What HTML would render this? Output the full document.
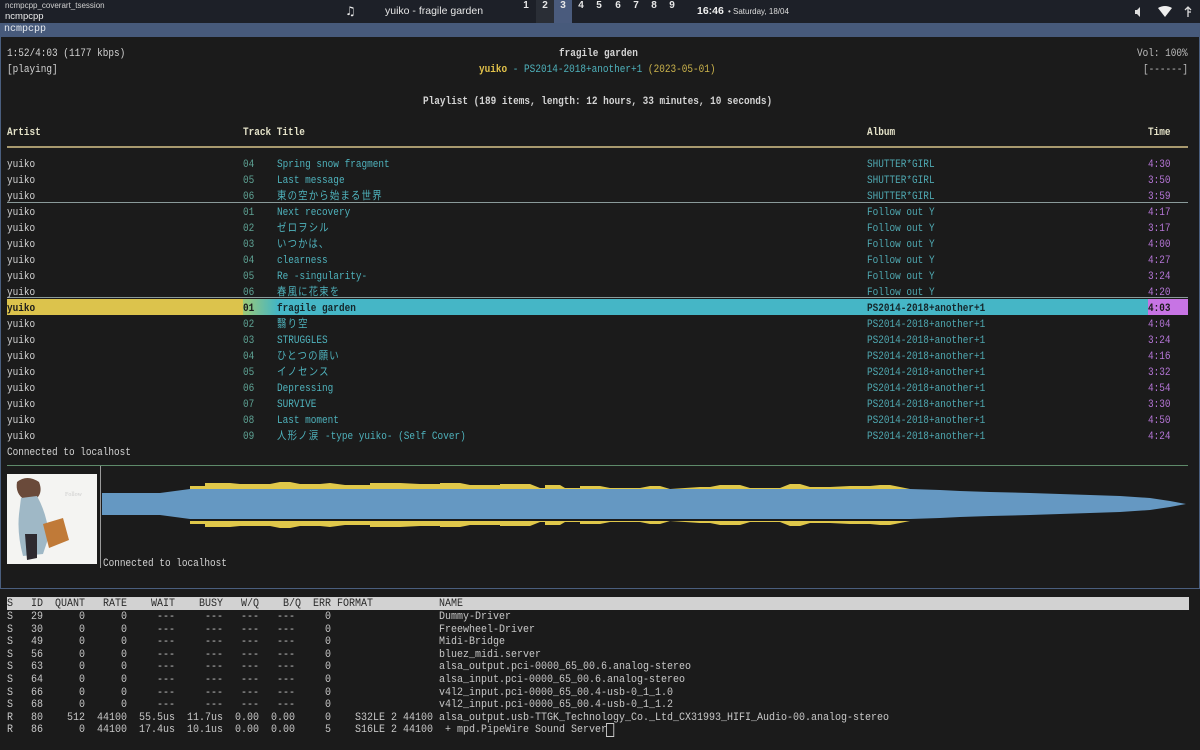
<!DOCTYPE html>
<html><head><meta charset="utf-8">
<style>
*{margin:0;padding:0;box-sizing:border-box}
body{width:1200px;height:750px;background:#1b1b1b;overflow:hidden;position:relative;font-family:"Liberation Mono","Noto Sans CJK JP",monospace;}
.t{position:absolute;margin-top:1.5px;font-size:11px;line-height:16px;height:16px;white-space:pre;color:#d4d4d4;transform:scaleX(0.853);transform-origin:0 0}
.b{font-weight:bold}
.cj{letter-spacing:1.4px;font-family:"Noto Sans CJK JP",sans-serif;font-size:11px;display:inline-block;line-height:16px;height:16px;vertical-align:top;margin-top:-2px}
.tr{color:#5fa496}.ti{color:#4fb3bd}.al{color:#4fa9b2}.tm{color:#b676d8}
.bar{position:absolute;left:0;top:0;width:1200px;height:23px;background:#1d2028}
.ws{position:absolute;top:0;height:23px;line-height:23px;font:bold 10px "Liberation Sans",sans-serif;color:#e8e8e8;width:18px;text-align:center}
pre{position:absolute;left:7px;font-family:"Liberation Mono",monospace;font-size:11px;line-height:12.6px;color:#c8c8c8;transform:scaleX(0.909);transform-origin:0 0}
</style></head><body>
<div class="bar"></div>
<div style="position:absolute;left:5px;top:1px;font:8px 'Liberation Sans',sans-serif;color:#d0d0d0">ncmpcpp_coverart_tsession</div>
<div style="position:absolute;left:5px;top:11px;font:9.5px 'Liberation Sans',sans-serif;color:#eee">ncmpcpp</div>
<div style="position:absolute;left:345px;top:4px;font:bold 12px 'DejaVu Sans',sans-serif;color:#eee">♫</div>
<div style="position:absolute;left:385px;top:5px;font:10.5px 'Liberation Sans',sans-serif;color:#e6e6e6">yuiko - fragile garden</div>
<div style="position:absolute;left:536px;top:0;width:18px;height:23px;background:#2a2e36"></div>
<div style="position:absolute;left:554px;top:0;width:18px;height:23px;background:#4a5b7d"></div>
<div class="ws" style="left:517px">1</div><div class="ws" style="left:536px">2</div><div class="ws" style="left:554px">3</div><div class="ws" style="left:572px">4</div><div class="ws" style="left:590px">5</div><div class="ws" style="left:609px">6</div><div class="ws" style="left:627px">7</div><div class="ws" style="left:645px">8</div><div class="ws" style="left:663px">9</div>
<div style="position:absolute;left:697px;top:5px;font:bold 10.5px 'Liberation Sans',sans-serif;color:#f0f0f0">16:46</div>
<div style="position:absolute;left:728px;top:7px;font:8px 'Liberation Sans',sans-serif;color:#ddd">• Saturday, 18/04</div>
<svg style="position:absolute;left:1130px;top:4px" width="65" height="16" viewBox="0 0 65 16">
<path d="M5 6h2l3-3v10l-3-3H5z" fill="#ddd"/>
<path d="M28 4 Q35 0 42 4 L35 13z" fill="#eee"/>
<path d="M58 3v10M58 8h3M55 6l3-3 3 3" stroke="#ddd" fill="none" stroke-width="1.3"/>
</svg>
<div style="position:absolute;left:0;top:23px;width:1200px;height:14px;background:#475a7b"></div>
<div style="position:absolute;left:4px;top:23px;font:10px 'Liberation Mono',monospace;line-height:14px;color:#e4e8ee">ncmpcpp</div>
<div style="position:absolute;left:0;top:37px;width:1200px;height:552px;border:1px solid #4a5e7e;border-top:none"></div>

<div class="t" style="left:7px;top:44px">1:52/4:03 (1177 kbps)</div>
<div class="t b" style="left:559px;top:44px">fragile garden</div>
<div class="t" style="left:1137px;top:44px;color:#bdbdbd">Vol: 100%</div>
<div class="t" style="left:7px;top:60px">[playing]</div>
<div class="t" style="left:479px;top:60px"><span class="b" style="color:#e2c24a">yuiko</span><span class="ti"> - PS2014-2018+another+1 </span><span style="color:#cdb54c">(2023-05-01)</span></div>
<div class="t" style="left:1143px;top:60px;color:#bdbdbd">[------]</div>
<div class="t b" style="left:423px;top:92px">Playlist (189 items, length: 12 hours, 33 minutes, 10 seconds)</div>
<div class="t b" style="left:7px;top:123px;color:#e4e2c8">Artist</div>
<div class="t b" style="left:243px;top:123px;color:#e4e2c8">Track Title</div>
<div class="t b" style="left:867px;top:123px;color:#e4e2c8">Album</div>
<div class="t b" style="left:1148px;top:123px;color:#e4e2c8">Time</div>
<div style="position:absolute;left:7px;top:146px;width:1181px;height:2px;background:#a8996e"></div>
<div style="position:absolute;left:7px;top:202px;width:1181px;height:1px;background:#8a9a9a"></div>
<div style="position:absolute;left:7px;top:297px;width:1181px;height:1px;background:#8a9a9a"></div>
<div style="position:absolute;left:7px;top:299px;width:236px;height:16px;background:#dcc34c"></div>
<div style="position:absolute;left:243px;top:299px;width:34px;height:16px;background:linear-gradient(90deg,#9cc878,#45b6c2)"></div>
<div style="position:absolute;left:277px;top:299px;width:871px;height:16px;background:#45b6c6"></div>
<div style="position:absolute;left:1148px;top:299px;width:40px;height:16px;background:#c774e4"></div>

<div class="t" style="left:7px;top:155px">yuiko</div><div class="t tr" style="left:243px;top:155px">04</div><div class="t ti" style="left:277px;top:155px">Spring snow fragment</div><div class="t al" style="left:867px;top:155px">SHUTTER*GIRL</div><div class="t tm" style="left:1148px;top:155px">4:30</div>
<div class="t" style="left:7px;top:171px">yuiko</div><div class="t tr" style="left:243px;top:171px">05</div><div class="t ti" style="left:277px;top:171px">Last message</div><div class="t al" style="left:867px;top:171px">SHUTTER*GIRL</div><div class="t tm" style="left:1148px;top:171px">3:50</div>
<div class="t" style="left:7px;top:187px">yuiko</div><div class="t tr" style="left:243px;top:187px">06</div><div class="t ti" style="left:277px;top:187px"><span class="cj">東の空から始まる世界</span></div><div class="t al" style="left:867px;top:187px">SHUTTER*GIRL</div><div class="t tm" style="left:1148px;top:187px">3:59</div>
<div class="t" style="left:7px;top:203px">yuiko</div><div class="t tr" style="left:243px;top:203px">01</div><div class="t ti" style="left:277px;top:203px">Next recovery</div><div class="t al" style="left:867px;top:203px">Follow out Y</div><div class="t tm" style="left:1148px;top:203px">4:17</div>
<div class="t" style="left:7px;top:219px">yuiko</div><div class="t tr" style="left:243px;top:219px">02</div><div class="t ti" style="left:277px;top:219px"><span class="cj">ゼロヲシル</span></div><div class="t al" style="left:867px;top:219px">Follow out Y</div><div class="t tm" style="left:1148px;top:219px">3:17</div>
<div class="t" style="left:7px;top:235px">yuiko</div><div class="t tr" style="left:243px;top:235px">03</div><div class="t ti" style="left:277px;top:235px"><span class="cj">いつかは、</span></div><div class="t al" style="left:867px;top:235px">Follow out Y</div><div class="t tm" style="left:1148px;top:235px">4:00</div>
<div class="t" style="left:7px;top:251px">yuiko</div><div class="t tr" style="left:243px;top:251px">04</div><div class="t ti" style="left:277px;top:251px">clearness</div><div class="t al" style="left:867px;top:251px">Follow out Y</div><div class="t tm" style="left:1148px;top:251px">4:27</div>
<div class="t" style="left:7px;top:267px">yuiko</div><div class="t tr" style="left:243px;top:267px">05</div><div class="t ti" style="left:277px;top:267px">Re -singularity-</div><div class="t al" style="left:867px;top:267px">Follow out Y</div><div class="t tm" style="left:1148px;top:267px">3:24</div>
<div class="t" style="left:7px;top:283px">yuiko</div><div class="t tr" style="left:243px;top:283px">06</div><div class="t ti" style="left:277px;top:283px"><span class="cj">春風に花束を</span></div><div class="t al" style="left:867px;top:283px">Follow out Y</div><div class="t tm" style="left:1148px;top:283px">4:20</div>
<div class="t b" style="left:7px;top:299px;color:#1b1b1b">yuiko</div><div class="t b" style="left:243px;top:299px;color:#1b1b1b">01</div><div class="t b" style="left:277px;top:299px;color:#15262a">fragile garden</div><div class="t b" style="left:867px;top:299px;color:#15262a">PS2014-2018+another+1</div><div class="t b" style="left:1148px;top:299px;color:#1b1b1b">4:03</div>
<div class="t" style="left:7px;top:315px">yuiko</div><div class="t tr" style="left:243px;top:315px">02</div><div class="t ti" style="left:277px;top:315px"><span class="cj">翳り空</span></div><div class="t al" style="left:867px;top:315px">PS2014-2018+another+1</div><div class="t tm" style="left:1148px;top:315px">4:04</div>
<div class="t" style="left:7px;top:331px">yuiko</div><div class="t tr" style="left:243px;top:331px">03</div><div class="t ti" style="left:277px;top:331px">STRUGGLES</div><div class="t al" style="left:867px;top:331px">PS2014-2018+another+1</div><div class="t tm" style="left:1148px;top:331px">3:24</div>
<div class="t" style="left:7px;top:347px">yuiko</div><div class="t tr" style="left:243px;top:347px">04</div><div class="t ti" style="left:277px;top:347px"><span class="cj">ひとつの願い</span></div><div class="t al" style="left:867px;top:347px">PS2014-2018+another+1</div><div class="t tm" style="left:1148px;top:347px">4:16</div>
<div class="t" style="left:7px;top:363px">yuiko</div><div class="t tr" style="left:243px;top:363px">05</div><div class="t ti" style="left:277px;top:363px"><span class="cj">イノセンス</span></div><div class="t al" style="left:867px;top:363px">PS2014-2018+another+1</div><div class="t tm" style="left:1148px;top:363px">3:32</div>
<div class="t" style="left:7px;top:379px">yuiko</div><div class="t tr" style="left:243px;top:379px">06</div><div class="t ti" style="left:277px;top:379px">Depressing</div><div class="t al" style="left:867px;top:379px">PS2014-2018+another+1</div><div class="t tm" style="left:1148px;top:379px">4:54</div>
<div class="t" style="left:7px;top:395px">yuiko</div><div class="t tr" style="left:243px;top:395px">07</div><div class="t ti" style="left:277px;top:395px">SURVIVE</div><div class="t al" style="left:867px;top:395px">PS2014-2018+another+1</div><div class="t tm" style="left:1148px;top:395px">3:30</div>
<div class="t" style="left:7px;top:411px">yuiko</div><div class="t tr" style="left:243px;top:411px">08</div><div class="t ti" style="left:277px;top:411px">Last moment</div><div class="t al" style="left:867px;top:411px">PS2014-2018+another+1</div><div class="t tm" style="left:1148px;top:411px">4:50</div>
<div class="t" style="left:7px;top:427px">yuiko</div><div class="t tr" style="left:243px;top:427px">09</div><div class="t ti" style="left:277px;top:427px"><span class="cj">人形ノ涙</span> -type yuiko- (Self Cover)</div><div class="t al" style="left:867px;top:427px">PS2014-2018+another+1</div><div class="t tm" style="left:1148px;top:427px">4:24</div>
<div class="t" style="left:7px;top:443px">Connected to localhost</div>

<div style="position:absolute;left:7px;top:465px;width:1181px;height:1px;background:#5e8a6a"></div>
<div style="position:absolute;left:100px;top:466px;width:1px;height:102px;background:#9a9a9a"></div>
<svg style="position:absolute;left:7px;top:474px" width="90" height="90" viewBox="0 0 90 90">
<rect width="90" height="90" fill="#f4f4f2"/>
<path d="M10 8 Q20 0 32 8 Q36 18 30 24 L18 26 Q8 20 10 8z" fill="#6a4a3a"/>
<path d="M14 24 L30 22 Q40 40 42 62 L36 80 L16 82 Q10 60 12 40z" fill="#9fb8c6"/>
<path d="M18 60 L30 60 L30 84 L20 86z" fill="#2e2a30"/>
<path d="M36 50 L56 44 L62 66 L42 74z" fill="#c07a38"/>
<text x="58" y="22" font-size="6" fill="#ccc" font-family="Liberation Serif">Follow</text>
</svg>
<svg style="position:absolute;left:0;top:0" width="1200" height="600">
<g id="y"><polygon fill="#e0c84a" points="190,489 190,486 205,486 205,483 230,483 240,484 270,484 280,482 290,482 300,484 320,484 330,483 345,485 370,485 370,483 400,483 420,484 440,484 440,483 460,483 470,485 500,485 500,484 530,484 540,488 545,488 545,485 560,485 565,488 580,488 580,486 600,486 610,488 640,488 650,486 660,486 670,489 700,487 710,487 720,485 740,485 750,488 780,488 790,484 800,484 810,487 830,487 850,486 870,486 880,485 890,485 900,487 910,489"/></g>
<use href="#y" transform="translate(0,1010) scale(1,-1)"/>
<polygon fill="#6598c2" points="102,493 160,493 175,491 190,489 910,489 940,490 960,491 990,492 1030,493 1060,494 1120,496 1150,498 1170,501 1186,504 1170,507 1150,510 1120,512 1060,514 1030,515 990,516 960,517 940,518 910,519 190,519 175,517 160,515 102,515"/>
</svg>
<div class="t" style="left:103px;top:554px">Connected to localhost</div>

<div style="position:absolute;left:7px;top:597px;width:1182px;height:13px;background:#d2d2d2"></div>
<pre style="top:598px;color:#2a2a2a">S   ID  QUANT   RATE    WAIT    BUSY   W/Q    B/Q  ERR FORMAT           NAME</pre>
<pre style="top:611px">S   29      0      0     ---     ---   ---   ---     0                  Dummy-Driver
S   30      0      0     ---     ---   ---   ---     0                  Freewheel-Driver
S   49      0      0     ---     ---   ---   ---     0                  Midi-Bridge
S   56      0      0     ---     ---   ---   ---     0                  bluez_midi.server
S   63      0      0     ---     ---   ---   ---     0                  alsa_output.pci-0000_65_00.6.analog-stereo
S   64      0      0     ---     ---   ---   ---     0                  alsa_input.pci-0000_65_00.6.analog-stereo
S   66      0      0     ---     ---   ---   ---     0                  v4l2_input.pci-0000_65_00.4-usb-0_1_1.0
S   68      0      0     ---     ---   ---   ---     0                  v4l2_input.pci-0000_65_00.4-usb-0_1_1.2
R   80    512  44100  55.5us  11.7us  0.00  0.00     0    S32LE 2 44100 alsa_output.usb-TTGK_Technology_Co._Ltd_CX31993_HIFI_Audio-00.analog-stereo
R   86      0  44100  17.4us  10.1us  0.00  0.00     5    S16LE 2 44100  + mpd.PipeWire Sound Server<span style="outline:1px solid #ccc"> </span></pre>
</body></html>
